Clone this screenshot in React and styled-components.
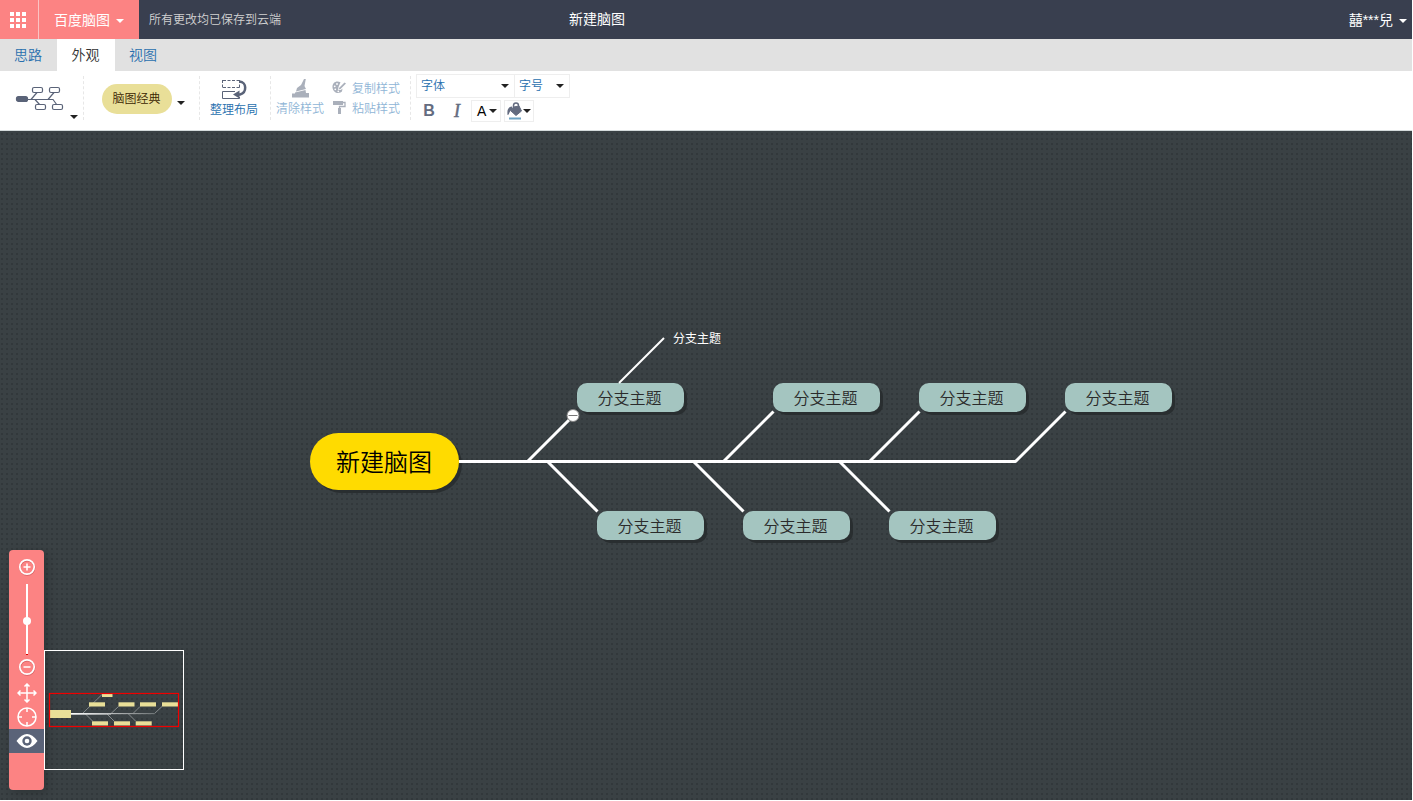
import React from 'react'

import styled, { createGlobalStyle } from 'styled-components'

const GlobalStyle = createGlobalStyle`
  * {
    box-sizing: border-box;
  }
  body {
    margin: 0;
    background: #fff;
    font-family: 'Liberation Sans', 'Noto Sans CJK SC', sans-serif;
    overflow: hidden;
  }
  svg {
    display: block;
    flex: none;
  }
`

const Page = styled.div`
  display: flex;
  flex-direction: column;
  width: 1412px;
  height: 800px;
  color: #333;
  font-weight: 350;
`

const Header = styled.header`
  display: grid;
  grid-template-columns: 1fr auto 1fr;
  height: 39px;
  line-height: 39px;
  background: #393f4f;
  color: #fff;
  font-size: 14px;
`

const HeaderLeft = styled.div`
  display: flex;
`

const AppsButton = styled.a`
  display: flex;
  align-items: center;
  width: 39px;
  padding-left: 10px;
  background: #fc8383;
  border-right: 1px solid #fbc3c3;
`

const BrandButton = styled.a`
  display: flex;
  align-items: center;
  width: 100px;
  padding-left: 15px;
  background: #fc8383;
  font-weight: normal;
`

const SaveState = styled.span`
  padding: 1px 0 0 10px;
  color: #d2d2d2;
  font-size: 12px;
`

const DocTitle = styled.h1`
  margin: 0;
  padding-right: 218px;
  font-size: 14px;
  font-weight: normal;
`

const UserMenu = styled.div`
  display: flex;
  align-items: center;
  justify-content: flex-end;
  padding-right: 5px;
  font-weight: normal;
`

const Caret = styled.i`
  flex: none;
  border: 4px solid transparent;
  border-top-color: ${(props) => props.$color || '#222'};
  border-bottom: 0;
  margin-left: ${(props) => props.$gap || 0}px;
  margin-top: ${(props) => props.$drop || 0}px;
`

const Tabs = styled.nav`
  display: flex;
  height: 32px;
  background: #e1e1e1;
`

const Tab = styled.a`
  width: ${(props) => (props.$active ? 58 : 57)}px;
  padding-right: 1px;
  line-height: 32px;
  text-align: center;
  font-size: 14px;
  color: ${(props) => (props.$active ? '#333' : '#286fae')};
  background: ${(props) => (props.$active ? '#fff' : 'transparent')};
`

const Toolbar = styled.div`
  display: flex;
  height: 60px;
  padding-top: 5px;
  border-bottom: 1px solid #d5dbdb;
  background: #fff;
  font-size: 12px;
`

const Group = styled.div`
  display: flex;
  flex: none;
  width: ${(props) => props.$width}px;
  height: 44px;
  border-right: 1px dashed #e7e7e7;
`

const TemplatePicker = styled(Group)`
  padding: 10px 0 0 15px;
`

const ThemePicker = styled(Group)`
  padding: 8px 0 0 18px;
`

const ThemePill = styled.span`
  width: 70px;
  height: 30px;
  padding-right: 1px;
  line-height: 30px;
  border-radius: 15px;
  background: #e9df98;
  color: #3a2500;
  text-align: center;
`

const StackButton = styled.a`
  display: flex;
  flex-direction: column;
  align-items: center;
  width: ${(props) => props.$width}px;
  padding-top: 3px;
  line-height: 18px;
  color: ${(props) => (props.$disabled ? '#8fb5d6' : '#286fae')};
  svg {
    margin-bottom: 2px;
  }
`

const StyleClipboard = styled.div`
  display: flex;
  flex-direction: column;
  gap: 2px;
  padding: 2px 0 0 3px;
`

const ClipboardButton = styled.a`
  display: flex;
  align-items: center;
  gap: 6px;
  height: 18px;
  color: #8fb5d6;
`

const FontTools = styled.div`
  display: flex;
  flex-direction: column;
  gap: 2px;
  margin: -2px 0 0 5px;
`

const ToolRow = styled.div`
  display: flex;
`

const Select = styled.div`
  display: flex;
  align-items: center;
  justify-content: space-between;
  width: ${(props) => props.$width}px;
  height: 24px;
  margin-right: -1px;
  padding: 0 5px 4px 4px;
  border: 1px solid #eee;
  color: #286fae;
`

const FormatButton = styled.b`
  width: 28px;
  margin-left: ${(props) => (props.$italic ? 0 : -1)}px;
  line-height: 22px;
  text-align: center;
  font-family: ${(props) =>
    props.$italic ? "'Liberation Serif', serif" : "'Liberation Sans', sans-serif"};
  font-style: ${(props) => (props.$italic ? 'italic' : 'normal')};
  font-weight: ${(props) => (props.$italic ? 'normal' : 'bold')};
  font-size: ${(props) => (props.$italic ? 18 : 16)}px;
  -webkit-text-stroke: ${(props) => (props.$italic ? '0.5px' : '0')};
  color: #646c80;
`

const ColorButton = styled.span`
  display: flex;
  align-items: center;
  width: 30px;
  height: 22px;
  margin-right: 3px;
  padding-left: ${(props) => props.$pad}px;
  border: 1px solid #eee;
  color: #000;
  font-size: 14px;
`

const Stage = styled.main`
  position: relative;
  flex: 1;
  background: #3a4144
    conic-gradient(from 270deg at 2px 2px, #32383b 90deg, transparent 0) 1px 2px /
    5px 5px;
`

const Links = styled.svg`
  position: absolute;
  inset: 0;
`

const Node = styled.div`
  position: absolute;
  left: ${(props) => props.$x}px;
  top: ${(props) => props.$y}px;
  white-space: nowrap;
`

const RootNode = styled(Node)`
  width: 149px;
  height: 57px;
  padding-right: 1px;
  line-height: 60px;
  border-radius: 29px;
  background: #ffdb00;
  box-shadow: 3px 3px 0 #292e30;
  color: #000;
  font-size: 24px;
  text-align: center;
`

const BranchNode = styled(Node)`
  width: 107px;
  height: 29px;
  padding-right: 2px;
  line-height: 31px;
  border-radius: 10px;
  background: #a4c5c0;
  box-shadow: 3px 3px 0 #292e30;
  color: #2b2b2b;
  font-size: 16px;
  text-align: center;
`

const LeafNode = styled(Node)`
  line-height: 18px;
  color: #fff;
  font-size: 12px;
  font-weight: normal;
`

const Navigator = styled.aside`
  position: absolute;
  left: 9px;
  bottom: 10px;
  display: flex;
  align-items: flex-end;
`

const NavBar = styled.div`
  display: flex;
  flex-direction: column;
  align-items: center;
  width: 35px;
  height: 240px;
  padding-top: 7px;
  border-radius: 4px;
  background: #fc8383;
  box-shadow: 3px 3px 10px rgba(0, 0, 0, 0.2);
`

const NavIcon = styled.span`
  display: flex;
  align-items: center;
  justify-content: center;
  width: 35px;
  height: ${(props) => props.$height || 24}px;
  padding-top: ${(props) => props.$drop || 0}px;
  background: ${(props) => (props.$active ? '#5a6378' : 'transparent')};
`

const ZoomTrack = styled.div`
  display: flex;
  align-items: center;
  justify-content: center;
  width: 2px;
  height: 71px;
  margin: 7px 0 2px 1px;
  padding-top: 3px;
  background: #fff;
  border-bottom: 1px solid #d00;
`

const ZoomKnob = styled.i`
  flex: none;
  width: 8px;
  height: 8px;
  border-radius: 50%;
  background: #fff;
`

const MiniMap = styled.div`
  width: 140px;
  height: 120px;
  margin-bottom: 20px;
  border: 1px solid #fff;
`

const upper = [577, 773, 919, 1065]
const lower = [597, 743, 889]

function AppsIcon() {
  return (
    <svg width="16" height="16" fill="#fff">
      {[0, 6, 12].map((y) =>
        [0, 6, 12].map((x) => (
          <rect key={`${x}-${y}`} x={x} y={y} width="4" height="4" />
        ))
      )}
    </svg>
  )
}

function FishboneIcon() {
  return (
    <svg width="50" height="26" fill="none" stroke="#5a6378" strokeWidth="1.200">
      <rect x="1.500" y="10.500" width="11" height="5" rx="2" fill="#5a6378" />
      <path d="M13 13.500H38.500M16 13.500l6-7M33 13.500l6-7M20 13.500l5 5.500M38 13.500l4 5.500" />
      <g fill="#fff">
        <rect x="17.500" y="1.500" width="10" height="5" rx="1.500" />
        <rect x="34.500" y="1.500" width="10" height="5" rx="1.500" />
        <rect x="20.500" y="18.500" width="10" height="5" rx="1.500" />
        <rect x="37.500" y="18.500" width="10" height="5" rx="1.500" />
      </g>
    </svg>
  )
}

function LayoutIcon() {
  return (
    <svg width="26" height="20" fill="none" stroke="#5a6378">
      <path d="M2 1.500H20M2 8.500H20M1.500 1V9M18.500 1V9" strokeDasharray="3 1.500" />
      <path d="M14 12.500H1.500v7h17v-1.500" />
      <path d="M18.500 2.500c7.500 .5 7.500 11 .5 13h-2" strokeWidth="2.500" />
      <path d="M12 15.500l6.500-4v8z" fill="#5a6378" stroke="none" />
    </svg>
  )
}

function BroomIcon() {
  return (
    <svg width="18" height="19" fill="#aab0bb">
      <path d="M13 0h1.800L13.500 7l1.500 3-10 2.500 1-3.500 4-3z" />
      <path d="M4 13.500L14.500 11l.5 3h3v4.500H1V14.500h3z" />
    </svg>
  )
}

function PaletteIcon() {
  return (
    <svg width="14" height="13" fill="#aab0bb">
      <path d="M8.500 1.300C4-1 0 2 .5 6.500S5 13 8.500 11.500C11 10.500 9.500 9 11 7.500L8.500 9H6l.5-3z" />
      <path d="M12.500 1.500L14 2.500 8.500 8 6.500 8.500 7.500 6.500z" />
      <g fill="#fff">
        <circle cx="2.700" cy="5.300" r=".9" />
        <circle cx="5" cy="3" r=".9" />
        <circle cx="3.300" cy="8.300" r=".9" />
        <circle cx="6.300" cy="10.300" r=".9" />
      </g>
    </svg>
  )
}

function RollerIcon() {
  return (
    <svg width="14" height="13" fill="#aab0bb">
      <rect x="1" y="0" width="10" height="4" />
      <path d="M11 1.500h2v4h-5.500V7" fill="none" stroke="#aab0bb" strokeWidth="1.300" />
      <rect x="6" y="7" width="3" height="6" />
    </svg>
  )
}

function BucketIcon() {
  return (
    <svg width="16" height="18" fill="#646c80">
      <path
        d="M6.500 5L12 4l2.500 5-5.500 4.500-5-4.500z"
        stroke="#646c80"
        strokeLinejoin="round"
      />
      <path d="M6.500 8V3.500c0-3.500 5-3.500 5 0V7" fill="none" stroke="#646c80" strokeWidth="1.500" />
      <path d="M5 4.500C1 5 0 8 .5 13 2.500 13 2 9 5 8z" />
      <rect x="2" y="15.500" width="12" height="2" fill="#6fa3c4" />
    </svg>
  )
}

function ZoomIcon({ plus }) {
  return (
    <svg width="18" height="18" fill="none" stroke="#fff" strokeWidth="1.700">
      <circle cx="9.300" cy="9.800" r="7.200" stroke="#d55f62" />
      <circle cx="9" cy="9" r="7.200" />
      <path d={plus ? 'M5.500 9h7M9 5.500v7' : 'M5.500 9h7'} strokeWidth="1.500" />
    </svg>
  )
}

function MoveIcon() {
  return (
    <svg width="20" height="20" fill="none" stroke="#fff" strokeWidth="1.500">
      <path d="M10 1v18M1 10h18M7.500 3.500L10 1l2.500 2.500M7.500 16.500L10 19l2.500-2.500M3.500 7.500L1 10l2.500 2.500M16.500 7.500L19 10l-2.500 2.500" />
    </svg>
  )
}

function TargetIcon() {
  return (
    <svg width="20" height="20" fill="none" stroke="#fff" strokeWidth="1.500">
      <circle cx="10" cy="10" r="9" />
      <path d="M10 1v4M10 15v4M1 10h4M15 10h4" />
    </svg>
  )
}

function EyeIcon() {
  return (
    <svg width="22" height="16" fill="#fff">
      <path d="M.5 8Q11-6 21.500 8 11 22 .5 8z" />
      <circle cx="11" cy="8" r="4.700" fill="#5a6378" />
      <circle cx="11" cy="8" r="2.300" />
    </svg>
  )
}

function MiniMapDrawing() {
  return (
    <svg width="138" height="118" viewBox="45 651 138 118" fill="none">
      <defs>
        <linearGradient id="spine" gradientUnits="userSpaceOnUse" x1="71" x2="155" y1="0" y2="0">
          <stop offset="0" stopColor="#fff" />
          <stop offset="1" stopColor="#6e7476" />
        </linearGradient>
      </defs>
      <path
        d="M82.500 713.500L102 694.500M111 713.500l7.500-7M133 713.500l7-7M154.500 713.500l7.500-7M85.500 714l7 7M107 714l7 7M128.500 714l7 7"
        stroke="#858a8c"
      />
      <rect x="71" y="713" width="40" height="1.700" fill="url(#spine)" />
      <rect x="111" y="713" width="43.500" height="1.200" fill="url(#spine)" />
      <g fill="#e9df98">
        <rect x="50" y="710" width="21" height="8" />
        <rect x="102" y="694" width="10.500" height="3" />
        {[89, 118.5, 140, 162].map((x) => (
          <rect key={x} x={x} y="702.300" width="16" height="4.200" />
        ))}
        {[92, 114, 135.7].map((x) => (
          <rect key={x} x={x} y="721.300" width="16" height="4.200" />
        ))}
      </g>
      <rect x="49.500" y="693.500" width="129" height="33" stroke="#f00000" strokeWidth="1.200" />
    </svg>
  )
}

function MindMap() {
  return (
    <>
      <RootNode $x={310} $y={302}>
        新建脑图
      </RootNode>
      {upper.map((x) => (
        <BranchNode key={x} $x={x} $y={252}>
          分支主题
        </BranchNode>
      ))}
      {lower.map((x) => (
        <BranchNode key={x} $x={x} $y={380}>
          分支主题
        </BranchNode>
      ))}
      <LeafNode $x={673} $y={199}>
        分支主题
      </LeafNode>
      <Links
        width="1412"
        height="669"
        viewBox="0 131 1412 669"
        fill="none"
        stroke="#fff"
        strokeWidth="3"
      >
        <path d="M459 461.500H1015.500L1065.500 411.500" strokeLinejoin="round" />
        {upper.slice(0, 3).map((x) => (
          <path key={x} d={`M${x - 49.5} 461.500L${x + 0.5} 411.500`} />
        ))}
        {lower.map((x) => (
          <path key={x} d={`M${x - 49.5} 461.500L${x + 0.5} 511.500`} />
        ))}
        <path d="M619 383L664 338" strokeWidth="2" />
        <circle cx="573" cy="415.500" r="6" fill="#fff" stroke="#858585" strokeWidth="1" />
        <path d="M568.500 415.500h9" stroke="#777" strokeWidth="1" />
      </Links>
    </>
  )
}

export default function App() {
  return (
    <Page>
      <GlobalStyle />
      <Header>
        <HeaderLeft>
          <AppsButton>
            <AppsIcon />
          </AppsButton>
          <BrandButton>
            百度脑图
            <Caret $color="#fff" $gap={6} $drop={1} />
          </BrandButton>
          <SaveState>所有更改均已保存到云端</SaveState>
        </HeaderLeft>
        <DocTitle>新建脑图</DocTitle>
        <UserMenu>
          囍***兒
          <Caret $color="#fff" $gap={6} $drop={1} />
        </UserMenu>
      </Header>

      <Tabs>
        <Tab>思路</Tab>
        <Tab $active>外观</Tab>
        <Tab>视图</Tab>
      </Tabs>

      <Toolbar>
        <TemplatePicker $width={84}>
          <FishboneIcon />
          <Caret $gap={5} $drop={29} />
        </TemplatePicker>
        <ThemePicker $width={116}>
          <ThemePill>脑图经典</ThemePill>
          <Caret $gap={5} $drop={17} />
        </ThemePicker>
        <Group $width={71}>
          <StackButton $width={68}>
            <LayoutIcon />
            整理布局
          </StackButton>
        </Group>
        <Group $width={140}>
          <StackButton $width={58} $disabled>
            <BroomIcon />
            清除样式
          </StackButton>
          <StyleClipboard>
            <ClipboardButton>
              <PaletteIcon />
              复制样式
            </ClipboardButton>
            <ClipboardButton>
              <RollerIcon />
              粘贴样式
            </ClipboardButton>
          </StyleClipboard>
        </Group>
        <FontTools>
          <ToolRow>
            <Select $width={99}>
              字体
              <Caret $drop={3} />
            </Select>
            <Select $width={56}>
              字号
              <Caret $drop={3} />
            </Select>
          </ToolRow>
          <ToolRow>
            <FormatButton>B</FormatButton>
            <FormatButton $italic>I</FormatButton>
            <ColorButton $pad={5}>
              A
              <Caret $gap={3} />
            </ColorButton>
            <ColorButton $pad={2}>
              <BucketIcon />
              <Caret />
            </ColorButton>
          </ToolRow>
        </FontTools>
      </Toolbar>

      <Stage>
        <MindMap />
        <Navigator>
          <NavBar>
            <NavIcon $height={20}>
              <ZoomIcon plus />
            </NavIcon>
            <ZoomTrack>
              <ZoomKnob />
            </ZoomTrack>
            <NavIcon $height={20}>
              <ZoomIcon />
            </NavIcon>
            <NavIcon $height={28} $drop={4}>
              <MoveIcon />
            </NavIcon>
            <NavIcon>
              <TargetIcon />
            </NavIcon>
            <NavIcon $active>
              <EyeIcon />
            </NavIcon>
          </NavBar>
          <MiniMap>
            <MiniMapDrawing />
          </MiniMap>
        </Navigator>
      </Stage>
    </Page>
  )
}
